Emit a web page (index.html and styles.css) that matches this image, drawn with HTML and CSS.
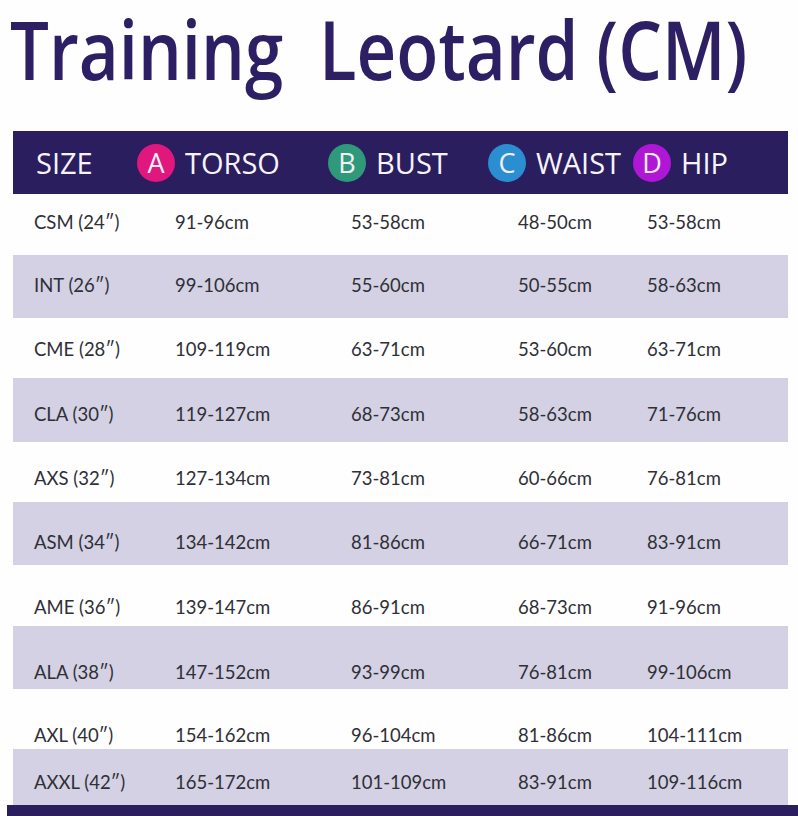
FILE: index.html
```html
<!DOCTYPE html>
<html>
<head>
<meta charset="utf-8">
<link rel="stylesheet" href="styles.css">
</head>
<body>
<div class="page">
  <h1 class="title"><span class="title-text">Training&nbsp; Leotard (CM)</span></h1>
  <div class="table">
    <div class="head">
      <div class="hcell size">SIZE</div>
      <div class="hcell"><span class="dot dot-a">A</span>TORSO</div>
      <div class="hcell"><span class="dot dot-b">B</span>BUST</div>
      <div class="hcell"><span class="dot dot-c">C</span>WAIST</div>
      <div class="hcell"><span class="dot dot-d">D</span>HIP</div>
    </div>
    <div class="row"><span>CSM (24″)</span><span>91-96cm</span><span>53-58cm</span><span>48-50cm</span><span>53-58cm</span></div>
    <div class="row alt"><span>INT (26″)</span><span>99-106cm</span><span>55-60cm</span><span>50-55cm</span><span>58-63cm</span></div>
    <div class="row"><span>CME (28″)</span><span>109-119cm</span><span>63-71cm</span><span>53-60cm</span><span>63-71cm</span></div>
    <div class="row alt"><span>CLA (30″)</span><span>119-127cm</span><span>68-73cm</span><span>58-63cm</span><span>71-76cm</span></div>
    <div class="row"><span>AXS (32″)</span><span>127-134cm</span><span>73-81cm</span><span>60-66cm</span><span>76-81cm</span></div>
    <div class="row alt"><span>ASM (34″)</span><span>134-142cm</span><span>81-86cm</span><span>66-71cm</span><span>83-91cm</span></div>
    <div class="row"><span>AME (36″)</span><span>139-147cm</span><span>86-91cm</span><span>68-73cm</span><span>91-96cm</span></div>
    <div class="row alt"><span>ALA (38″)</span><span>147-152cm</span><span>93-99cm</span><span>76-81cm</span><span>99-106cm</span></div>
    <div class="row"><span>AXL (40″)</span><span>154-162cm</span><span>96-104cm</span><span>81-86cm</span><span>104-111cm</span></div>
    <div class="row alt"><span>AXXL (42″)</span><span>165-172cm</span><span>101-109cm</span><span>83-91cm</span><span>109-116cm</span></div>
  </div>
  <div class="bottom-bar"></div>
</div>
</body>
</html>
```

FILE: styles.css
```css
* { box-sizing: border-box; }
html, body {
  margin: 0;
  padding: 0;
  background: #fefefe;
}
.page {
  width: 798px;
  height: 816px;
  overflow: hidden;
}
.title {
  margin: 0;
  padding: 8px 0 0 10px;
  height: 131px;
  font-family: "Open Sans", sans-serif;
  font-weight: 600;
  font-size: 69px;
  line-height: 69px;
  color: #2d1f63;
  white-space: nowrap;
}
.title-text {
  display: inline-block;
  transform: scaleY(1.174);
  transform-origin: left top;
}
.table {
  margin-left: 13px;
  width: 775px;
}
.head {
  height: 63px;
  background: #2b1e5f;
  display: grid;
  grid-template-columns: 101px 191px 160px 145px 1fr;
  align-items: center;
  padding-left: 23px;
  font-family: "Open Sans", sans-serif;
  font-weight: 500;
  font-size: 29px;
  color: #f6f4fb;
}
.hcell {
  display: flex;
  align-items: center;
  gap: 10px;
  white-space: nowrap;
}
.dot {
  width: 38px;
  height: 38px;
  border-radius: 50%;
  display: flex;
  align-items: center;
  justify-content: center;
  font-size: 27px;
  font-weight: 400;
  color: #f3eef8;
  flex: none;
}
.dot-a { background: #e0177c; }
.dot-b { background: #2f9a79; }
.dot-c { background: #2b8ed0; }
.dot-d { background: #b016d6; }
.row {
  display: grid;
  grid-template-columns: 141px 176px 167px 129px 1fr;
  align-items: start;
  padding-left: 21px;
  font-family: Lato, sans-serif;
  font-size: 18.5px;
  line-height: 20px;
  color: #2f2f36;
  white-space: nowrap;
}
.row.alt { background: #d3d1e3; }
.row:nth-child(2) { height: 61px; padding-top: 18px; }
.row:nth-child(3) { height: 63px; padding-top: 20px; }
.row:nth-child(4) { height: 60px; padding-top: 21px; }
.row:nth-child(5) { height: 64px; padding-top: 26px; }
.row:nth-child(6) { height: 60px; padding-top: 26px; }
.row:nth-child(7) { height: 63px; padding-top: 30px; }
.row:nth-child(8) { height: 61px; padding-top: 32px; }
.row:nth-child(9) { height: 63px; padding-top: 36px; }
.row:nth-child(10) { height: 60px; padding-top: 36px; }
.row:nth-child(11) { height: 56px; padding-top: 23px; }
.bottom-bar {
  margin-left: 7px;
  height: 11px;
  background: #2b1e5f;
}
```
